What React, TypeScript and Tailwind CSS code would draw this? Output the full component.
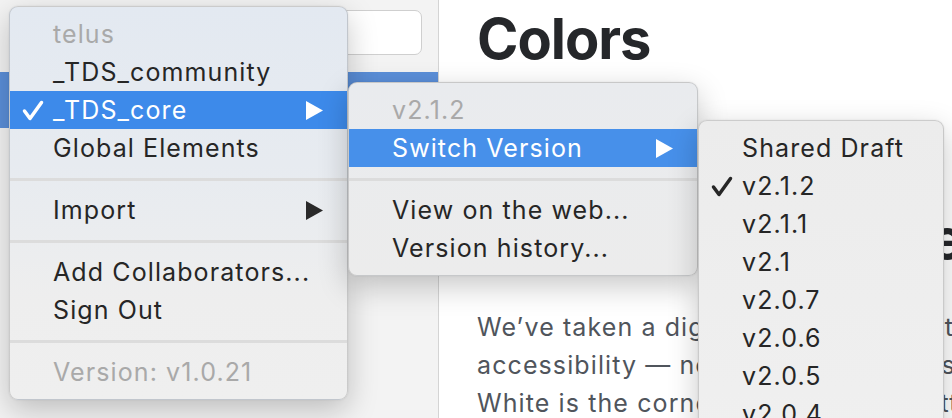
import React from "react";

type Item =
  | { kind: "sep" }
  | {
      kind: "row";
      text: string;
      muted?: boolean;
      checked?: boolean;
      arrow?: boolean;
      active?: boolean;
    };

const font = { fontFamily: "Inter, 'Noto Sans', sans-serif" };

const Check = ({ light }: { light?: boolean }) => (
  <svg width="22" height="21" viewBox="0 0 22 21" className="shrink-0">
    <path
      d="M2.5 11 L8 18.5 L19.5 2.5"
      fill="none"
      stroke={light ? "#ffffff" : "#262626"}
      strokeWidth="3.5"
      strokeLinecap="round"
      strokeLinejoin="round"
    />
  </svg>
);

const Arrow = ({ light }: { light?: boolean }) => (
  <svg width="17" height="19" viewBox="0 0 17 19" className="shrink-0">
    <polygon points="0,0 17,9.5 0,19" fill={light ? "#ffffff" : "#2a2a2a"} />
  </svg>
);

const Menu = ({
  items,
  className,
  bg,
  highlight,
}: {
  items: Item[];
  className: string;
  bg: string;
  highlight: string;
}) => (
  <div
    className={`absolute rounded-[9px] border border-black/15 py-[8px] shadow-[0_10px_30px_rgba(0,0,0,0.22),0_0_2px_rgba(0,0,0,0.1)] ${bg} ${className}`}
    style={font}
  >
    {items.map((it, i) =>
      it.kind === "sep" ? (
        <div key={i} className="flex h-[24px] items-center">
          <div className="h-[3px] w-full bg-[#dcdcdc]" />
        </div>
      ) : (
        <div
          key={i}
          className={`flex h-[38px] items-center pr-[24px] text-[25px] leading-none tracking-[1.1px] ${
            it.active ? `${highlight} text-white` : it.muted ? "text-[#a9a9a9]" : "text-[#262626]"
          }`}
        >
          <div className="flex w-[43px] justify-end pr-[9px]">
            {it.checked && <Check light={it.active} />}
          </div>
          <span className="flex-1 whitespace-nowrap">{it.text}</span>
          {it.arrow && <Arrow light={it.active} />}
        </div>
      )
    )}
  </div>
);

const mainItems: Item[] = [
  { kind: "row", text: "telus", muted: true },
  { kind: "row", text: "_TDS_community" },
  { kind: "row", text: "_TDS_core", checked: true, arrow: true, active: true },
  { kind: "row", text: "Global Elements" },
  { kind: "sep" },
  { kind: "row", text: "Import", arrow: true },
  { kind: "sep" },
  { kind: "row", text: "Add Collaborators..." },
  { kind: "row", text: "Sign Out" },
  { kind: "sep" },
  { kind: "row", text: "Version: v1.0.21", muted: true },
];

const subItems: Item[] = [
  { kind: "row", text: "v2.1.2", muted: true },
  { kind: "row", text: "Switch Version", arrow: true, active: true },
  { kind: "sep" },
  { kind: "row", text: "View on the web..." },
  { kind: "row", text: "Version history..." },
];

const versions = ["Shared Draft", "v2.1.2", "v2.1.1", "v2.1", "v2.0.7", "v2.0.6", "v2.0.5", "v2.0.4", "v2.0.3"];
const versionItems: Item[] = versions.map((v) => ({ kind: "row", text: v, checked: v === "v2.1.2" }));

export default function App() {
  return (
    <div className="relative flex h-[418px] w-[952px] overflow-hidden bg-white" style={font}>
      {/* Sidebar */}
      <aside className="flex w-[439px] shrink-0 flex-col border-r border-[#d4d4d4] bg-[#f3f3f3]">
        <div className="px-[16px] pt-[10px] pr-[16px]">
          <div className="h-[45px] rounded-[7px] border border-[#cfcfcf] bg-white" />
        </div>
        <div className="mt-[17px] h-[56px] bg-[#5b8fd9]" />
      </aside>

      {/* Content */}
      <main className="flex-1 overflow-hidden pl-[38px] pt-[5px]">
        <h1 className="text-[56px] font-bold leading-[68px] tracking-[-1px] text-[#25272a]">Colors</h1>
        <h2 className="mt-[132px] whitespace-nowrap text-[56px] font-bold leading-[68px] tracking-[-1px] text-[#25272a]">
          Accessible palette
        </h2>
        <p className="mt-[35px] whitespace-nowrap text-[25px] leading-[38px] tracking-[1.1px] text-[#50555c]">
          We’ve taken a digital-first approach to our colo
          <br />
          accessibility — now every colour passes
          <br />
          White is the cornerstone of our palette
        </p>
      </main>

      <Menu
        items={mainItems}
        className="left-[9px] top-[6px] w-[339px]"
        bg="bg-[linear-gradient(180deg,#e3e9f1_0%,#e7ebf0_40%,#eeeeee_75%,#efefef_100%)]"
        highlight="bg-[#3d8aea]"
      />
      <Menu
        items={subItems}
        className="left-[348px] top-[82px] w-[350px]"
        bg="bg-[linear-gradient(180deg,#e9ebee_0%,#ececec_100%)]"
        highlight="bg-[#4790ea]"
      />
      <Menu
        items={versionItems}
        className="left-[698px] top-[120px] w-[246px]"
        bg="bg-[linear-gradient(180deg,#ececec_0%,#f0f0f0_100%)]"
        highlight="bg-[#4790ea]"
      />
    </div>
  );
}
